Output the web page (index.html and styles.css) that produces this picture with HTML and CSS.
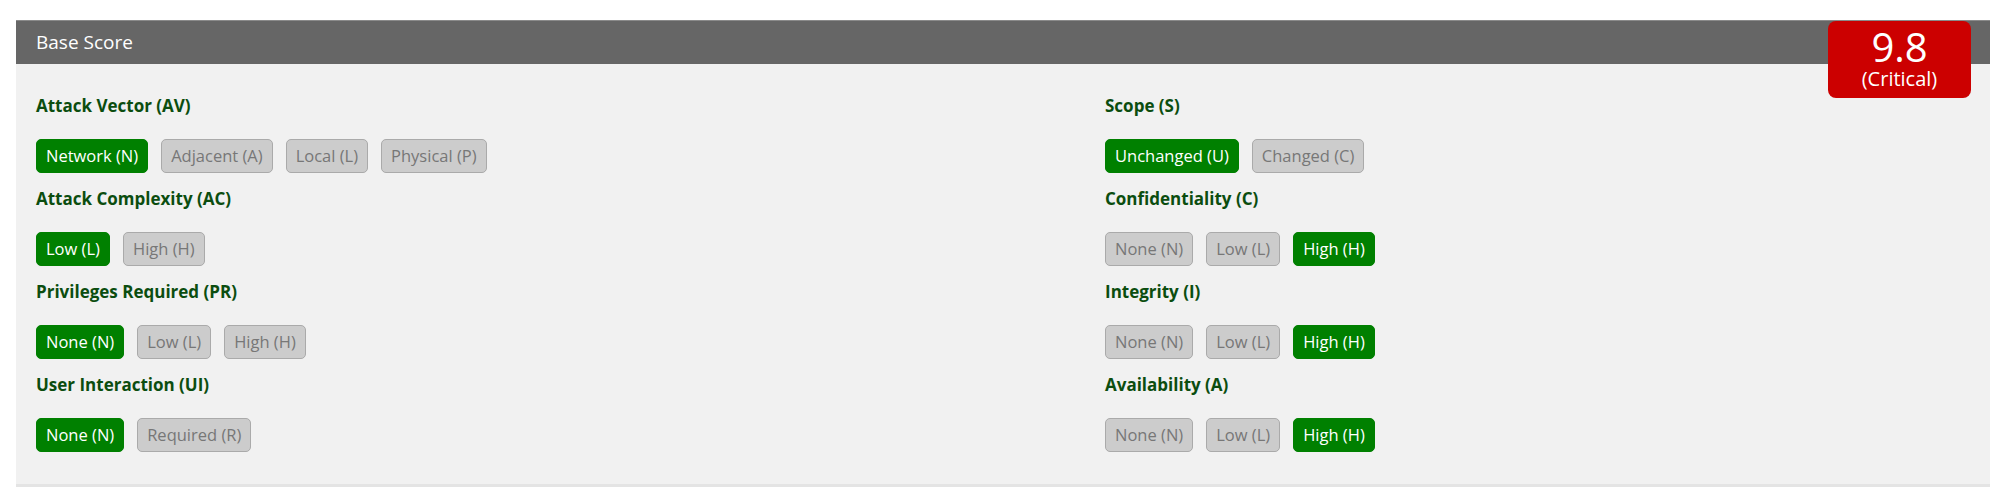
FILE: index.html
```html
<!DOCTYPE html>
<html lang="en">
<head>
  <meta charset="UTF-8" />
  <title>CVSS Base Score</title>
  <link rel="stylesheet" href="styles.css">
</head>
<body>
  <div class="panel">
    <div class="panel-head">Base Score</div>
    <div class="score-badge">
      <div class="score-value">9.8</div>
      <div class="score-rating">(Critical)</div>
    </div>
    <div class="panel-body">
      <div class="metric-col">
        <div class="metric">
          <div class="metric-label">Attack Vector (AV)</div>
          <div class="metric-options">
            <span class="opt active">Network (N)</span>
            <span class="opt">Adjacent (A)</span>
            <span class="opt">Local (L)</span>
            <span class="opt">Physical (P)</span>
          </div>
        </div>
        <div class="metric">
          <div class="metric-label">Attack Complexity (AC)</div>
          <div class="metric-options">
            <span class="opt active">Low (L)</span>
            <span class="opt">High (H)</span>
          </div>
        </div>
        <div class="metric">
          <div class="metric-label">Privileges Required (PR)</div>
          <div class="metric-options">
            <span class="opt active">None (N)</span>
            <span class="opt">Low (L)</span>
            <span class="opt">High (H)</span>
          </div>
        </div>
        <div class="metric">
          <div class="metric-label">User Interaction (UI)</div>
          <div class="metric-options">
            <span class="opt active">None (N)</span>
            <span class="opt">Required (R)</span>
          </div>
        </div>
      </div>
      <div class="metric-col">
        <div class="metric">
          <div class="metric-label">Scope (S)</div>
          <div class="metric-options">
            <span class="opt active">Unchanged (U)</span>
            <span class="opt">Changed (C)</span>
          </div>
        </div>
        <div class="metric">
          <div class="metric-label">Confidentiality (C)</div>
          <div class="metric-options">
            <span class="opt">None (N)</span>
            <span class="opt">Low (L)</span>
            <span class="opt active">High (H)</span>
          </div>
        </div>
        <div class="metric">
          <div class="metric-label">Integrity (I)</div>
          <div class="metric-options">
            <span class="opt">None (N)</span>
            <span class="opt">Low (L)</span>
            <span class="opt active">High (H)</span>
          </div>
        </div>
        <div class="metric">
          <div class="metric-label">Availability (A)</div>
          <div class="metric-options">
            <span class="opt">None (N)</span>
            <span class="opt">Low (L)</span>
            <span class="opt active">High (H)</span>
          </div>
        </div>
      </div>
    </div>
  </div>
</body>
</html>
```

FILE: styles.css
```css
html, body {
  margin: 0;
  padding: 0;
}
body {
  background: #fff;
  font-family: "Open Sans", "Liberation Sans", sans-serif;
  padding: 20px 9px 0 16px;
}
.panel {
  position: relative;
  background: #f1f1f1;
  border-bottom: 3px solid #e4e4e4;
}
.panel-head {
  background: #666;
  border-top: 1px solid #8a8a8a;
  color: #fff;
  font-size: 19px;
  line-height: 43px;
  padding-left: 20px;
}
.score-badge {
  position: absolute;
  top: 1px;
  right: 19px;
  width: 143px;
  box-sizing: border-box;
  padding: 5px 0 9px;
  background: #cc0000;
  border-radius: 8px;
  color: #fff;
  text-align: center;
}
.score-value {
  font-size: 40px;
  line-height: 42px;
}
.score-rating {
  font-size: 20px;
  line-height: 21px;
}
.panel-body {
  display: grid;
  grid-template-columns: 1069px 1fr;
  padding: 30px 20px 18px;
}
.metric {
  margin-bottom: 14px;
}
.metric-label {
  color: #0b4d0f;
  font-size: 17px;
  font-weight: 700;
  line-height: 24px;
  margin-bottom: 21px;
}
.metric-options {
  display: flex;
  gap: 13px;
}
.opt {
  display: inline-block;
  height: 34px;
  box-sizing: border-box;
  padding: 0 9px;
  border: 1px solid #aaa;
  border-radius: 5px;
  background: #ccc;
  color: #777;
  font-size: 16.5px;
  line-height: 32px;
}
.opt.active {
  background: #008000;
  border-color: #008000;
  color: #fff;
}
```
